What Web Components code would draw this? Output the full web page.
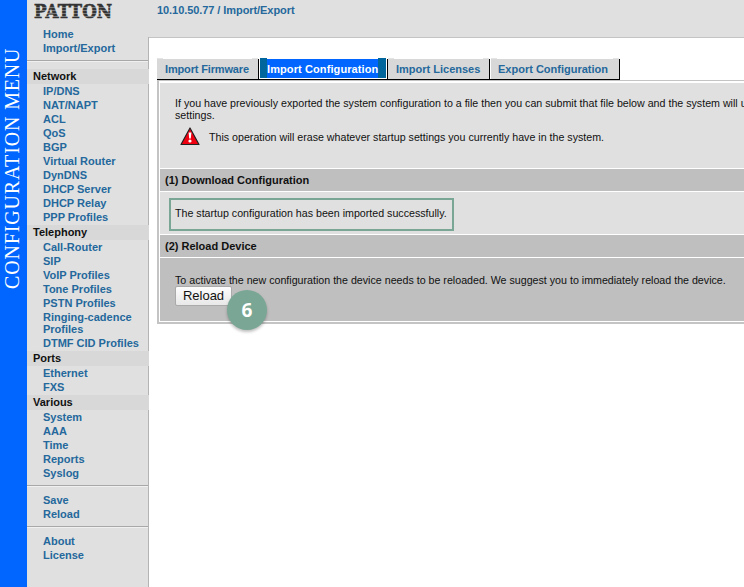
<!DOCTYPE html>
<html><head><meta charset="utf-8"><style>
html,body{margin:0;padding:0;background:#fff;overflow:hidden}
body{width:744px;height:587px;font:11px/14px "Liberation Sans",Arial,sans-serif}
</style></head><body>
<app-shell>
  <side-nav slot="nav">
    <nav-group><nav-link>Home</nav-link><nav-link>Import/Export</nav-link></nav-group>
    <nav-rule></nav-rule>
    <nav-group title="Network"><nav-link>IP/DNS</nav-link><nav-link>NAT/NAPT</nav-link><nav-link>ACL</nav-link><nav-link>QoS</nav-link><nav-link>BGP</nav-link><nav-link>Virtual Router</nav-link><nav-link>DynDNS</nav-link><nav-link>DHCP Server</nav-link><nav-link>DHCP Relay</nav-link><nav-link>PPP Profiles</nav-link></nav-group>
    <nav-group title="Telephony"><nav-link>Call-Router</nav-link><nav-link>SIP</nav-link><nav-link>VoIP Profiles</nav-link><nav-link>Tone Profiles</nav-link><nav-link>PSTN Profiles</nav-link><nav-link>Ringing-cadence Profiles</nav-link><nav-link>DTMF CID Profiles</nav-link></nav-group>
    <nav-group title="Ports"><nav-link>Ethernet</nav-link><nav-link>FXS</nav-link></nav-group>
    <nav-group title="Various"><nav-link>System</nav-link><nav-link>AAA</nav-link><nav-link>Time</nav-link><nav-link>Reports</nav-link><nav-link>Syslog</nav-link></nav-group>
    <nav-rule tight></nav-rule>
    <nav-group><nav-link>Save</nav-link><nav-link>Reload</nav-link></nav-group>
    <nav-rule tight></nav-rule>
    <nav-group><nav-link>About</nav-link><nav-link>License</nav-link></nav-group>
  </side-nav>
  <tab-bar slot="tabs">
    <tab-item style="width:102px;margin-right:1px;letter-spacing:-.15px">Import Firmware</tab-item><tab-item active style="width:128px;letter-spacing:.1px">Import Configuration</tab-item><tab-item style="width:102px;margin-right:1px">Import Licenses</tab-item><tab-item last style="width:129px">Export Configuration</tab-item>
  </tab-bar>
  <config-panel slot="panel"></config-panel>
</app-shell>
<script>
function def(name, css, html){
  customElements.define(name, class extends HTMLElement{
    constructor(){super();const r=this.attachShadow({mode:'open'});r.innerHTML='<style>'+css+'</style>'+(typeof html==='function'?html(this):html);}
  });
}
def('app-shell',`
:host{display:grid;grid-template-columns:27px 122px 1fr;grid-template-rows:38px 1fr;width:744px;height:587px;overflow:hidden}
.rail{grid-row:1/3;background:#0066ff;display:flex;justify-content:center;align-items:flex-start;padding:50px 3px 0 0;box-sizing:border-box}
.rail span{writing-mode:vertical-rl;transform:rotate(180deg);color:#fff;font:20px/24px "Liberation Serif","Times New Roman",serif;white-space:nowrap;height:239px;text-align:left;letter-spacing:.85px}
.side{grid-row:1/3;background:linear-gradient(#b4b4b4,#b4b4b4) no-repeat 100% 37px/1px 100%,#e0e0e0;box-sizing:border-box;display:flex;flex-direction:column}
.logo{height:27px;box-sizing:border-box;padding:3px 0 0 7px;white-space:nowrap;overflow:hidden;position:relative}
.logo b{display:inline-block;font:900 18px/18px "DejaVu Serif",serif;color:#333;-webkit-text-stroke:.7px #333;letter-spacing:.1px;transform:scaleX(.93) scaleY(.98);transform-origin:0 0}
.logo::after{content:"";position:absolute;left:6px;top:5px;width:80px;height:14px;background:repeating-linear-gradient(transparent 0 2px,rgba(224,224,224,.4) 2px 3px)}
.top{background:#e0e0e0;border-bottom:1px solid #c4c4c4;box-sizing:border-box;padding:3px 0 0 8px;height:38px;color:#24689c;font-weight:bold;line-height:14px;font-size:11px;letter-spacing:-.07px;white-space:nowrap}
.main{padding:20px 0 0 8px;min-width:0;overflow:hidden;background:#fff}
`,`
<div class="rail"><span>CONFIGURATION MENU</span></div>
<div class="side"><div class="logo"><b>PATTON</b></div><slot name="nav"></slot></div>
<div class="top">10.10.50.77 / Import/Export</div>
<div class="main"><slot name="tabs"></slot><slot name="panel"></slot></div>`);
def('side-nav',`:host{display:block;color:#24689c}`,`<slot></slot>`);
def('nav-group',`
:host{display:block}
.t{background:#d8d8d8;color:#111;font-weight:bold;height:15px;line-height:15px;padding-left:6px}
.l{display:block;padding:0 0 1px 0}
`,h=>(h.getAttribute('title')?`<div class="t">${h.getAttribute('title')}</div>`:'')+`<div class="l"><slot></slot></div>`);
def('nav-link',`
:host{display:block;padding:1px 8px 1px 16px;font-weight:bold;color:#24689c;line-height:12px;font-size:11px}
`,`<slot></slot>`);
def('nav-rule',`:host{display:block;height:2px;background:#a8a8a8;border-bottom:1px solid #f0f0f0;margin:4px 1px 7px 0;box-sizing:border-box}
:host([tight]){margin-bottom:6px}`,``);
def('tab-bar',`
:host{display:flex;align-items:flex-start;height:22px;box-sizing:border-box;padding-top:1px;border-bottom:1px solid #000;width:463px}
`,`<slot></slot>`);
def('tab-item',`
:host{display:block;position:relative;height:20px;box-sizing:border-box;border-right:1px solid #000;color:#24689c;font-weight:bold;font-size:11px;line-height:20px;white-space:nowrap}
.in{height:20px;background:#d8d8d8;padding-left:8px;box-sizing:border-box}
:host([last]) .in{padding-left:7px}
:host::before,:host::after{content:"";position:absolute;top:-1px;height:1px;width:6px;background:#e4e4e4}
:host::before{left:0}:host::after{right:0}
:host([active]){color:#fff}
:host([active]) .in{background:#0066ff;padding:0;border-left:7px solid #00669c;border-right:8px solid #00669c;margin-right:1px;height:19px}
:host([active])::before{width:7px;background:#00669c}
:host([active])::after{width:8px;right:1px;background:#00669c}
`,`<div class="in"><slot></slot></div>`);
def('config-panel',`
:host{display:block;width:640px;box-sizing:border-box;border:2px solid #c4c4c4;border-top-width:1px;background:#fff;padding:2px 1px 1px;color:#111;font-size:10.67px;line-height:12px}
.intro{background:#e0e0e0;height:85px;padding:14px 0 0 15px;box-sizing:border-box}
.intro p{margin:0;width:640px}
.warn{display:flex;align-items:center;gap:9px;margin:5px 0 0 5px;height:21px}
.warn svg{flex:none}
.h{background:#bfbfbf;height:22px;line-height:22px;font-weight:bold;padding-left:5px;margin-top:1px;font-size:11px;color:#111}
.dl{background:#e0e0e0;height:42px;margin-top:1px;padding:6px 0 0 9px;box-sizing:border-box}
.ok{display:inline-block;border:2px solid #7aa795;padding:0 5px 0 4px;height:33px;line-height:26px;box-sizing:border-box}
.rl{background:#bfbfbf;height:63px;margin-top:1px;padding:16px 0 0 15px;box-sizing:border-box;white-space:nowrap;position:relative}
.rl button{display:block;width:57px;height:20px;margin:0;padding:0;font:13px/18px "Liberation Sans",Arial,sans-serif;color:#111;background:linear-gradient(#fdfdfd,#e8e8e8);border:1px solid #aaa;border-radius:2px}
.badge{position:absolute;left:67px;top:32px;width:40px;height:40px;border-radius:50%;background:#7aa795;color:#fff;font:bold 19px/40px "Open Sans","Liberation Sans",sans-serif;text-align:center;box-shadow:0 2px 3px rgba(0,0,0,.25)}
`,`
<div class="intro">
<p>If you have previously exported the system configuration to a file then you can submit that file below and the system will use those settings.</p>
<div class="warn"><svg width="20" height="19" viewBox="0 0 20 19"><path d="M10 1 L19 17.5 H1 Z" fill="#ee0011" stroke="#222" stroke-width="1.2" stroke-linejoin="round"/><path d="M8.6 5.5h2.8l-.6 6h-1.6z" fill="#fff"/><circle cx="10" cy="14" r="1.6" fill="#fff"/></svg><span>This operation will erase whatever startup settings you currently have in the system.</span></div>
</div>
<div class="h">(1) Download Configuration</div>
<div class="dl"><span class="ok">The startup configuration has been imported successfully.</span></div>
<div class="h">(2) Reload Device</div>
<div class="rl">To activate the new configuration the device needs to be reloaded. We suggest you to immediately reload the device.<button>Reload</button><div class="badge">6</div></div>`);
</script>
</body></html>
